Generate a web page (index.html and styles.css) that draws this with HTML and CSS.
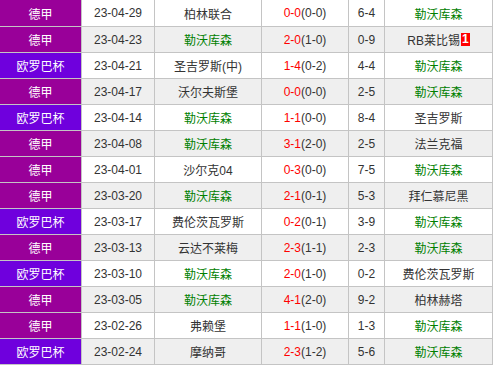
FILE: index.html
```html
<!DOCTYPE html>
<html lang="zh">
<head>
<meta charset="utf-8">
<link rel="stylesheet" href="styles.css">
</head>
<body>
<div class="grid">
  <div class="c lg bund">德甲</div><div class="c">23-04-29</div><div class="c">柏林联合</div><div class="c"><span class="ft">0-0</span>(0-0)</div><div class="c">6-4</div><div class="c hl">勒沃库森</div>
  <div class="c lg bund">德甲</div><div class="c alt">23-04-23</div><div class="c alt hl">勒沃库森</div><div class="c alt"><span class="ft">2-0</span>(1-0)</div><div class="c alt">0-9</div><div class="c alt">RB莱比锡<span class="rc">1</span></div>
  <div class="c lg uel">欧罗巴杯</div><div class="c">23-04-21</div><div class="c">圣吉罗斯(中)</div><div class="c"><span class="ft">1-4</span>(0-2)</div><div class="c">4-4</div><div class="c hl">勒沃库森</div>
  <div class="c lg bund">德甲</div><div class="c alt">23-04-17</div><div class="c alt">沃尔夫斯堡</div><div class="c alt"><span class="ft">0-0</span>(0-0)</div><div class="c alt">2-5</div><div class="c alt hl">勒沃库森</div>
  <div class="c lg uel">欧罗巴杯</div><div class="c">23-04-14</div><div class="c hl">勒沃库森</div><div class="c"><span class="ft">1-1</span>(0-0)</div><div class="c">8-4</div><div class="c">圣吉罗斯</div>
  <div class="c lg bund">德甲</div><div class="c alt">23-04-08</div><div class="c alt hl">勒沃库森</div><div class="c alt"><span class="ft">3-1</span>(2-0)</div><div class="c alt">2-5</div><div class="c alt">法兰克福</div>
  <div class="c lg bund">德甲</div><div class="c">23-04-01</div><div class="c">沙尔克04</div><div class="c"><span class="ft">0-3</span>(0-0)</div><div class="c">7-5</div><div class="c hl">勒沃库森</div>
  <div class="c lg bund">德甲</div><div class="c alt">23-03-20</div><div class="c alt hl">勒沃库森</div><div class="c alt"><span class="ft">2-1</span>(0-1)</div><div class="c alt">5-3</div><div class="c alt">拜仁慕尼黑</div>
  <div class="c lg uel">欧罗巴杯</div><div class="c">23-03-17</div><div class="c">费伦茨瓦罗斯</div><div class="c"><span class="ft">0-2</span>(0-1)</div><div class="c">3-9</div><div class="c hl">勒沃库森</div>
  <div class="c lg bund">德甲</div><div class="c alt">23-03-13</div><div class="c alt">云达不莱梅</div><div class="c alt"><span class="ft">2-3</span>(1-1)</div><div class="c alt">2-3</div><div class="c alt hl">勒沃库森</div>
  <div class="c lg uel">欧罗巴杯</div><div class="c">23-03-10</div><div class="c hl">勒沃库森</div><div class="c"><span class="ft">2-0</span>(1-0)</div><div class="c">0-2</div><div class="c">费伦茨瓦罗斯</div>
  <div class="c lg bund">德甲</div><div class="c alt">23-03-05</div><div class="c alt hl">勒沃库森</div><div class="c alt"><span class="ft">4-1</span>(2-0)</div><div class="c alt">9-2</div><div class="c alt">柏林赫塔</div>
  <div class="c lg bund">德甲</div><div class="c">23-02-26</div><div class="c">弗赖堡</div><div class="c"><span class="ft">1-1</span>(1-0)</div><div class="c">1-3</div><div class="c hl">勒沃库森</div>
  <div class="c lg uel">欧罗巴杯</div><div class="c alt">23-02-24</div><div class="c alt">摩纳哥</div><div class="c alt"><span class="ft">2-3</span>(1-2)</div><div class="c alt">5-6</div><div class="c alt hl">勒沃库森</div>
</div>
</body>
</html>
```
FILE: styles.css
```css
html, body {
  margin: 0;
  padding: 0;
  background: #ffffff;
}
body {
  font-family: "Liberation Sans", "Noto Sans CJK SC", sans-serif;
  font-size: 12px;
  color: #333333;
}
.grid {
  display: grid;
  grid-template-columns: 82px 73px 107px 87px 36px 108px;
  grid-template-rows: 27px repeat(13, 26px);
  width: 493px;
}
.c {
  box-sizing: border-box;
  border-right: 1px solid #c4c4c4;
  border-bottom: 1px solid #c4c4c4;
  display: flex;
  align-items: center;
  justify-content: center;
  white-space: nowrap;
  background: #ffffff;
  color: #333333;
}
.c.alt {
  background: #efefef;
}
.c.lg {
  color: #ffffff;
}
.c.bund {
  background: #990099;
}
.c.uel {
  background: #6f00dd;
}
.c.hl {
  color: #008000;
}
.c .ft {
  color: #ff0000;
}
.rc {
  display: inline-block;
  background: #ff0000;
  color: #ffffff;
  font-weight: bold;
  line-height: 13px;
  padding: 0 1px;
  margin-left: 1px;
}
```
